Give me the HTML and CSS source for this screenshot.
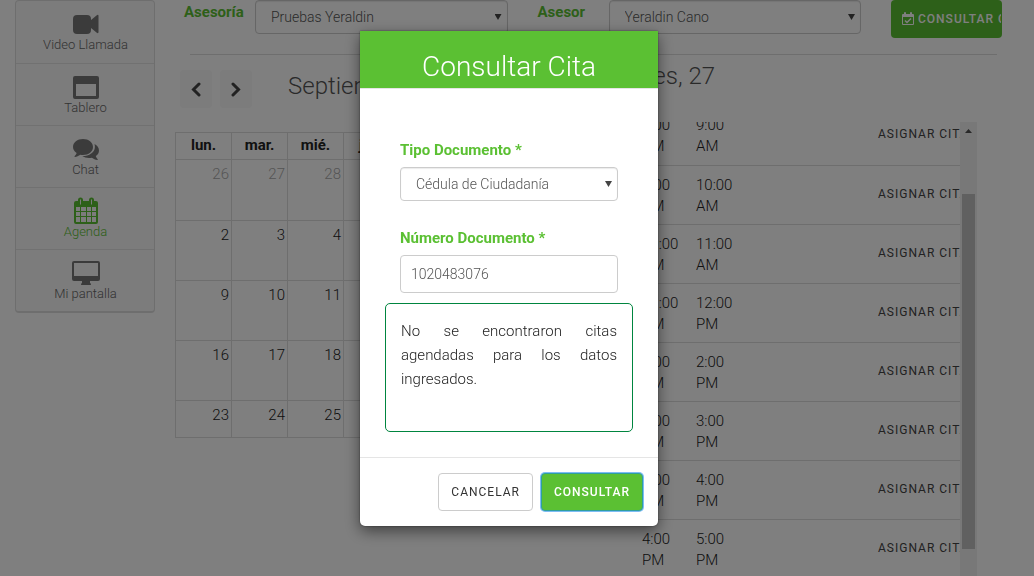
FILE: index.html
```html
<!DOCTYPE html>
<html lang="es">
<head>
<meta charset="utf-8">
<title>Agenda</title>
<link rel="stylesheet" href="styles.css">
</head>
<body>
<div class="page">
  <nav class="sidebar">
    <a href="#" class="nav-item">
      <svg class="nav-icon" viewBox="0 0 28 28"><path d="M5 5h10a4 4 0 0 1 4 4v1l5.500-4.500q2-1.500 2 .5v16q0 2-2 .5L19 18v2a4 4 0 0 1-4 4H5a4 4 0 0 1-4-4V9a4 4 0 0 1 4-4z"/></svg>
      <span>Video Llamada</span>
    </a>
    <a href="#" class="nav-item">
      <svg class="nav-icon" viewBox="0 0 28 28"><path fill-rule="evenodd" d="M3 3h22a2 2 0 0 1 2 2v19a2 2 0 0 1-2 2H3a2 2 0 0 1-2-2V5a2 2 0 0 1 2-2zM4 11v12h20V11z"/></svg>
      <span>Tablero</span>
    </a>
    <a href="#" class="nav-item">
      <svg class="nav-icon" viewBox="0 0 28 28"><path d="M11 4c5.600 0 10 3.500 10 8s-4.400 8-10 8c-.9 0-1.800-.1-2.600-.3C6.500 21 4.800 21.700 3 22c-.6 0-.7-.5-.3-.9C3.700 20 4.400 19.200 4.600 18 2.300 16.500 1 14.400 1 12c0-4.500 4.400-8 10-8z"/><path d="M22.500 9c2.800 1.400 4.500 3.700 4.500 6.500 0 2.300-1.200 4.200-3.200 5.600.2 1.200.9 2.100 1.700 2.900.5.500.3 1-.3 1-1.900-.2-3.700-1-5.300-2.200-3.900.7-7.300 0-9.600-1.700 6.600.1 12.600-3.600 12.600-9.100 0-1-.1-2-.4-3z"/></svg>
      <span>Chat</span>
    </a>
    <a href="#" class="nav-item active">
      <svg class="nav-icon" viewBox="0 0 28 28"><path fill-rule="evenodd" d="M4 4h2V3a2.500 2.500 0 0 1 5 0v1h6V3a2.500 2.500 0 0 1 5 0v1h2a2 2 0 0 1 2 2v19a2 2 0 0 1-2 2H4a2 2 0 0 1-2-2V6a2 2 0 0 1 2-2zM8 2.500v5h1v-5zM19 2.500v5h1v-5zM4 10v4h4v-4zM9 10v4h5v-4zM15 10v4h4v-4zM20 10v4h4v-4zM4 15v4h4v-4zM9 15v4h5v-4zM15 15v4h4v-4zM20 15v4h4v-4zM4 20v5h4v-5zM9 20v5h5v-5zM15 20v5h4v-5zM20 20v5h4v-5z"/></svg>
      <span>Agenda</span>
    </a>
    <a href="#" class="nav-item">
      <svg class="nav-icon" viewBox="0 0 28 28"><path fill-rule="evenodd" d="M2 2h24a2 2 0 0 1 2 2v16a2 2 0 0 1-2 2h-8v2q1 0 1 2H9q0-2 1-2v-2H2a2 2 0 0 1-2-2V4a2 2 0 0 1 2-2zM2 4v13h24V4z"/></svg>
      <span>Mi pantalla</span>
    </a>
  </nav>

  <main class="content">
    <form class="toolbar">
      <div class="field">
        <label for="asesoria">Asesoría</label>
        <div class="select-box"><select id="asesoria"><option>Pruebas Yeraldin</option></select></div>
      </div>
      <div class="field">
        <label for="asesor">Asesor</label>
        <div class="select-box"><select id="asesor"><option>Yeraldin Cano</option></select></div>
      </div>
      <button type="button" class="btn btn-primary btn-open">
        <svg class="btn-icon" viewBox="0 0 14 14"><path fill-rule="evenodd" d="M2 2h1V1q0-1 1-1t1 1v1h4V1q0-1 1-1t1 1v1h1q1 0 1 1v9q0 1-1 1H2q-1 0-1-1V3q0-1 1-1zM2 5v7h10V5z"/><path d="M4 8.500l2 2 4-4" fill="none" stroke="currentColor" stroke-width="1.500"/></svg>
        CONSULTAR CITA
      </button>
    </form>
    <hr class="divider">

    <div class="columns">
      <section>
        <header class="cal-header">
          <button type="button" class="cal-nav" aria-label="Anterior"><svg viewBox="0 0 16 16"><path d="M11 3L5.500 8.500 11 14"/></svg></button>
          <button type="button" class="cal-nav" aria-label="Siguiente"><svg viewBox="0 0 16 16"><path d="M5 3l5.500 5.500L5 14"/></svg></button>
          <h2 class="cal-title">Septiembre 2019</h2>
        </header>
        <table class="calendar">
          <thead><tr><th>lun.</th><th>mar.</th><th>mié.</th><th>jue.</th><th>vie.</th><th>sáb.</th><th>dom.</th></tr></thead>
          <tbody>
            <tr class="first"><td class="muted">26</td><td class="muted">27</td><td class="muted">28</td><td class="muted">29</td><td class="muted">30</td><td class="muted">31</td><td>1</td></tr>
            <tr><td>2</td><td>3</td><td>4</td><td>5</td><td>6</td><td>7</td><td>8</td></tr>
            <tr><td>9</td><td>10</td><td>11</td><td>12</td><td>13</td><td>14</td><td>15</td></tr>
            <tr><td>16</td><td>17</td><td>18</td><td>19</td><td>20</td><td>21</td><td>22</td></tr>
            <tr class="short"><td>23</td><td>24</td><td>25</td><td>26</td><td>27</td><td>28</td><td>29</td></tr>
          </tbody>
        </table>
      </section>

      <section class="day">
        <h2 class="day-title"><span>Viernes, 27</span></h2>
        <div class="slots">
          <div class="slots-view">
            <table class="slot-table">
              <tr><td>8:00 AM</td><td>9:00 AM</td><td><button type="button" class="assign">ASIGNAR CITA</button></td></tr>
              <tr><td>9:00 AM</td><td>10:00 AM</td><td><button type="button" class="assign">ASIGNAR CITA</button></td></tr>
              <tr><td>10:00 AM</td><td>11:00 AM</td><td><button type="button" class="assign">ASIGNAR CITA</button></td></tr>
              <tr><td>11:00 AM</td><td>12:00 PM</td><td><button type="button" class="assign">ASIGNAR CITA</button></td></tr>
              <tr><td>1:00 PM</td><td>2:00 PM</td><td><button type="button" class="assign">ASIGNAR CITA</button></td></tr>
              <tr><td>2:00 PM</td><td>3:00 PM</td><td><button type="button" class="assign">ASIGNAR CITA</button></td></tr>
              <tr><td>3:00 PM</td><td>4:00 PM</td><td><button type="button" class="assign">ASIGNAR CITA</button></td></tr>
              <tr><td>4:00 PM</td><td>5:00 PM</td><td><button type="button" class="assign">ASIGNAR CITA</button></td></tr>
            </table>
          </div>
          <div class="scrollbar"><span class="scroll-arrow"></span><span class="scroll-thumb"></span></div>
        </div>
      </section>
    </div>
  </main>
</div>

<div class="backdrop">
  <form class="modal" role="dialog" aria-labelledby="modal-title">
    <header class="modal-header"><h1 class="modal-title" id="modal-title">Consultar Cita</h1></header>
    <div class="modal-body">
      <div class="group">
        <label for="tipo">Tipo Documento *</label>
        <div class="select-box"><select id="tipo"><option>Cédula de Ciudadanía</option></select></div>
      </div>
      <div class="group">
        <label for="numero">Número Documento *</label>
        <input class="text-input" id="numero" type="text" value="1020483076">
      </div>
      <p class="notice">No se encontraron citas agendadas para los datos ingresados.</p>
    </div>
    <footer class="modal-footer">
      <button type="button" class="btn btn-default">CANCELAR</button>
      <button type="button" class="btn btn-primary focused">CONSULTAR</button>
    </footer>
  </form>
</div>
</body>
</html>
```

FILE: styles.css
```css
* { box-sizing: border-box; }
body {
  margin: 0;
  background: #fff;
  color: #222;
  font: 300 15px/21px Roboto, "Liberation Sans", sans-serif;
}
button, select, input { font: inherit; margin: 0; }
label { color: #5bc033; font-weight: 700; }

.page {
  display: flex;
  align-items: flex-start;
  gap: 20px;
  height: 100vh;
  padding: 0 32px 0 15px;
  overflow: hidden;
}

.sidebar {
  flex: none;
  width: 140px;
  border: 1px solid #ddd;
  border-bottom-width: 2px;
  border-radius: 4px;
  background: #f8f8f8;
}
.nav-item {
  display: flex;
  flex-direction: column;
  align-items: center;
  height: 62px;
  padding: 9px 0 0 1px;
  color: #666;
  font-size: 13px;
  line-height: 14px;
  text-decoration: none;
}
.nav-item + .nav-item { border-top: 1px solid #e2e2e2; }
.nav-icon { width: 28px; height: 28px; fill: #777; }
.active { color: #5bc033; }
.active .nav-icon { fill: #5bc033; }

.content { flex: 1; min-width: 0; }
.toolbar { display: flex; align-items: flex-start; gap: 30px; padding-left: 9px; }
.field { display: flex; flex: 1; }
.field label { width: 71px; padding-top: 2px; }
.field .select-box { flex: 1; }

.select-box { position: relative; }
.select-box select {
  display: block;
  width: 100%;
  height: 34px;
  padding: 0 15px;
  border: 1px solid #ccc;
  border-radius: 4px;
  background: #fff;
  box-shadow: inset 0 1px 1px rgba(0, 0, 0, .08);
  color: #555;
  font-size: 14px;
  appearance: none;
}
.select-box::after {
  content: "";
  position: absolute;
  top: 14px;
  right: 6px;
  width: 7px;
  height: 6px;
  background: #444;
  clip-path: polygon(0 0, 100% 0, 50% 100%);
  pointer-events: none;
}

.btn {
  height: 38px;
  padding: 0 12px;
  border: 1px solid transparent;
  border-radius: 4px;
  font-size: 12px;
  letter-spacing: 1px;
  white-space: nowrap;
}
.btn-primary { background: #5bc033; color: #fff; font-weight: 500; }
.btn-default { border-color: #ccc; background: #fff; color: #333; font-weight: 400; }
.btn-open { display: flex; align-items: center; gap: 3px; width: 111px; padding: 0 9px; overflow: hidden; }
.btn-icon { flex: none; width: 14px; height: 14px; fill: currentColor; }

.divider { height: 1px; margin: 16px 5px 15px 15px; border: 0; background: #ddd; }

.columns { display: grid; grid-template-columns: minmax(0, 393fr) minmax(0, 343fr); gap: 66px; margin-right: 25px; }
.cal-header { display: flex; gap: 8px; padding-left: 5px; height: 62px; }
.cal-nav {
  width: 32px;
  height: 38px;
  padding: 0 8px;
  border: 0;
  border-radius: 4px;
  background: #f8f8f8;
}
.cal-nav svg { display: block; width: 16px; height: 16px; fill: none; stroke: #444; stroke-width: 3; stroke-linecap: round; }
.cal-title, .day-title { margin: 0; color: #555; font-size: 24px; font-weight: 300; line-height: 32px; white-space: nowrap; }
.cal-title { padding-left: 28px; }

.calendar { width: 100%; border-collapse: collapse; table-layout: fixed; }
.calendar th { height: 27px; padding: 0 0 2px; border: 1px solid #ddd; background: #fff; color: #222; font-weight: 700; line-height: 22px; }
.calendar td { height: 60px; padding: 4px 2px 0; border: 1px solid #ddd; text-align: right; vertical-align: top; }
.calendar .first td { height: 61px; }
.calendar .short td { height: 37px; }
.calendar .muted { color: #aaa; }

.day-title { display: flex; justify-content: flex-end; height: 52px; padding-right: 262px; line-height: 12px; }
.slots { display: flex; height: calc(100vh - 122px); overflow: hidden; }
.slots-view { flex: 1; min-width: 0; overflow: hidden; }
.slot-table { width: 100%; margin-top: -16px; border-collapse: collapse; table-layout: fixed; }
.slot-table td { height: 59px; padding: 9px 0 7px 8px; border-bottom: 1px solid #ddd; vertical-align: top; }
.slot-table td:nth-child(1) { width: 54px; }
.slot-table td:nth-child(2) { width: 54px; }
.slot-table td:nth-child(3) { padding: 6px 0 8px 136px; vertical-align: middle; }
.assign { padding: 0; border: 0; background: none; color: #444; font-size: 12px; font-weight: 400; letter-spacing: 1px; white-space: nowrap; }

.scrollbar { display: flex; flex-direction: column; align-items: center; flex: none; width: 17px; padding-top: 7px; background: #f1f1f1; }
.scroll-arrow { width: 7px; height: 4px; background: #505050; clip-path: polygon(50% 0, 100% 100%, 0 100%); }
.scroll-thumb { width: 13px; height: 355px; margin-top: 61px; background: #c1c1c1; }

.backdrop {
  position: fixed;
  inset: 0;
  padding: 31px 16px 0 0;
  background: rgba(0, 0, 0, .5);
}
.modal {
  width: 298px;
  margin: 0 auto;
  border-radius: 0 0 5px 5px;
  background: #fff;
  box-shadow: 0 5px 15px rgba(0, 0, 0, .5), 0 0 2px rgba(0, 0, 0, .5);
}
.modal-header { padding-top: 15px; border-bottom: 1px solid #e5e5e5; background: #5bc033; background-clip: padding-box; }
.modal-title { margin: 0; color: #fff; font-size: 28px; font-weight: 300; line-height: 42px; text-align: center; }
.modal-body { padding: 51px 25px 25px; }
.group { padding: 0 15px; }
.group + .group { margin-top: 27px; }
.group label { display: block; margin-bottom: 6px; }
.text-input {
  display: block;
  width: 100%;
  height: 38px;
  padding: 0 10px;
  border: 1px solid #ccc;
  border-radius: 4px;
  color: #555;
  font-size: 14px;
}
.notice {
  margin: 10px 0 0;
  padding: 15px 15px 40px;
  border: 1px solid #00853f;
  border-radius: 5px;
  line-height: 24px;
  text-align: justify;
}
.modal-footer { display: flex; justify-content: flex-end; gap: 8px; padding: 15px; border-top: 1px solid #e5e5e5; }
.focused { border-color: #2f9f9f; box-shadow: 0 0 0 1px #7dbcf5; }
```
